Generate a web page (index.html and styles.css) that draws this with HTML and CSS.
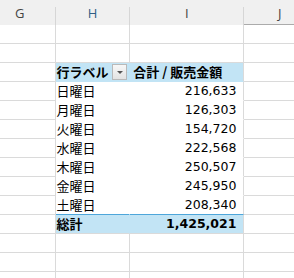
FILE: index.html
```html
<!DOCTYPE html>
<html lang="ja">
<head>
<meta charset="utf-8">
<link rel="stylesheet" href="styles.css">
</head>
<body>
<table class="sheet">
  <tr class="colhead">
    <th class="c-g">G</th>
    <th class="c-h active">H</th>
    <th class="c-i">I</th>
    <th class="c-j">J</th>
  </tr>
  <tr class="row"><td></td><td></td><td></td><td></td></tr>
  <tr class="row"><td></td><td></td><td></td><td></td></tr>
  <tr class="row pv-head">
    <td></td>
    <td class="pv-l"><div class="lbl"><span>行ラベル</span><span class="dd"><span class="tri"></span></span></div></td>
    <td class="pv-h">合計 / 販売金額</td>
    <td></td>
  </tr>
  <tr class="row pv"><td></td><td class="pv-l">日曜日</td><td class="pv-r num">216,633</td><td></td></tr>
  <tr class="row pv"><td></td><td class="pv-l">月曜日</td><td class="pv-r num">126,303</td><td></td></tr>
  <tr class="row pv"><td></td><td class="pv-l">火曜日</td><td class="pv-r num">154,720</td><td></td></tr>
  <tr class="row pv"><td></td><td class="pv-l">水曜日</td><td class="pv-r num">222,568</td><td></td></tr>
  <tr class="row pv"><td></td><td class="pv-l">木曜日</td><td class="pv-r num">250,507</td><td></td></tr>
  <tr class="row pv"><td></td><td class="pv-l">金曜日</td><td class="pv-r num">245,950</td><td></td></tr>
  <tr class="row pv last"><td></td><td class="pv-l">土曜日</td><td class="pv-r num">208,340</td><td></td></tr>
  <tr class="row pv-total"><td></td><td class="pv-l">総計</td><td class="pv-r num">1,425,021</td><td></td></tr>
  <tr class="row"><td></td><td></td><td></td><td></td></tr>
  <tr class="row"><td></td><td></td><td></td><td></td></tr>
  <tr class="row"><td></td><td></td><td></td><td></td></tr>
</table>
</body>
</html>
```

FILE: styles.css
```css
html, body {
  margin: 0;
  padding: 0;
  background: #ffffff;
  overflow: hidden;
}

.sheet {
  border-collapse: separate;
  border-spacing: 0;
  table-layout: fixed;
  width: 294px;
  font-family: "Noto Sans CJK JP", sans-serif;
  font-size: 13px;
  color: #000;
}

.sheet th, .sheet td {
  padding: 0;
  border-right: 1px solid #dadada;
  border-bottom: 1px solid #dadada;
  overflow: hidden;
  white-space: nowrap;
}

.sheet tr > :nth-child(1) { width: 55px; }
.sheet tr > :nth-child(2) { width: 74px; }
.sheet tr > :nth-child(3) { width: 113px; }
.sheet tr > :nth-child(4) { width: 49px; }

.colhead th {
  height: 22px;
  background: #f0f0f0;
  font-family: "Open Sans", "Liberation Sans", sans-serif;
  font-weight: normal;
  font-size: 13px;
  color: #444;
  text-align: center;
  line-height: 22px;
  padding-top: 2px;
  box-sizing: border-box;
  border-bottom: 1px solid #ababab;
  border-right: 1px solid transparent;
  border-image: linear-gradient(to bottom, #f0f0f0 30%, #d6d6d6 30%) 1;
  border-image-width: 0 1px 0 0;
}

.colhead th.active { color: #2f5f86; }
.colhead .c-g { padding-right: 15px; }
.colhead .c-j { padding-left: 21px; border-right: none; border-image: none; }

.row td {
  height: 18px;
  line-height: 18px;
}

.row td:last-child { border-right: none; }

.pv-l {
  padding-left: 1px !important;
}

.pv-r {
  text-align: right;
  padding-right: 7px !important;
}

.pv-h {
  text-align: left;
  padding-left: 3px !important;
}

.num {
  font-family: "DejaVu Sans", sans-serif;
  font-size: 12.5px;
}

.pv td.pv-l {
  border-right-color: #ffffff;
  border-bottom-color: #ffffff;
}
.pv td.pv-r {
  border-bottom-color: #ffffff;
}

.pv-head td.pv-l, .pv-head td.pv-h {
  background: #c2e4f5;
  font-weight: bold;
  border-bottom-color: #c2e4f5;
}
.pv-head td.pv-l { border-right-color: #c2e4f5; }

.lbl {
  display: flex;
  align-items: center;
  justify-content: space-between;
  padding-right: 2px;
}

.dd {
  width: 13px;
  height: 14px;
  border: 1px solid #b9b9b9;
  background: linear-gradient(to bottom, #f7f7f7, #e3e3e3);
  display: flex;
  align-items: center;
  justify-content: center;
}

.tri {
  width: 0;
  height: 0;
  border-left: 3px solid transparent;
  border-right: 3px solid transparent;
  border-top: 3px solid #555;
}

.pv.last td.pv-l, .pv.last td.pv-r {
  border-bottom-color: #4ea6da;
}

.pv-total td.pv-l, .pv-total td.pv-r {
  background: #c2e4f5;
  font-weight: bold;
}
.pv-total td.pv-l { border-right-color: #c2e4f5; }
```
